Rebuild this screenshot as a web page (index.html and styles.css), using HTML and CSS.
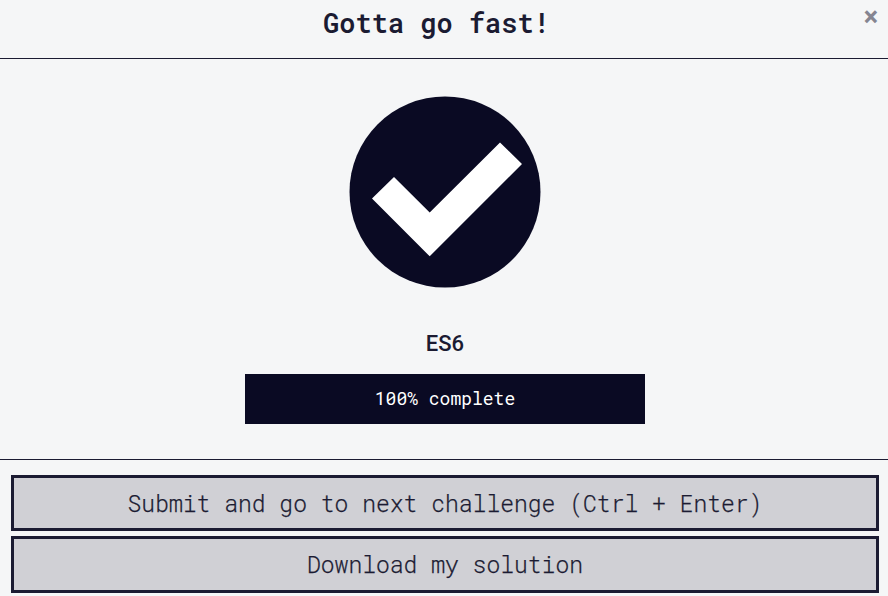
FILE: index.html
```html
<!DOCTYPE html>
<html lang="en">
<head>
<meta charset="utf-8">
<title>Challenge complete</title>
<link rel="stylesheet" href="styles.css">
</head>
<body>
<div class="modal">
<header class="header"><h1>Gotta go fast!</h1><button class="close" aria-label="Close">×</button></header>
<main class="body">
<svg class="check" viewBox="0 0 192 192" width="192" height="192"><circle cx="96" cy="96" r="95.5" fill="#0a0a23"/><path d="M45 81 80.700 116.500 151 46.500 173 68 80.700 160.300 23 102.600Z" fill="#fff"/></svg>
<h2>ES6</h2>
<div class="progress"><span>100% complete</span></div>
</main>
<footer class="footer">
<button class="action">Submit and go to next challenge (Ctrl + Enter)</button>
<button class="action download">Download my solution</button>
</footer>
</div>
</body>
</html>
```

FILE: styles.css
```css
* { box-sizing: border-box; }
body { margin: 0; background: #f5f6f7; color: #1b1b32; overflow: hidden; }
.modal { height: 596px; display: flex; flex-direction: column; }
.header { height: 59px; border-bottom: 1px solid #1b1b32; position: relative; text-align: center; }
h1 { margin: 5px 15px 0 0; font: 600 27px/36px "Roboto Mono", "DejaVu Sans Mono", monospace; }
.close { position: absolute; right: 10px; top: 2px; padding: 0; border: 0; background: none; color: #858591; font: 700 27px/30px Roboto, sans-serif; }
.body { height: 401px; border-bottom: 1px solid #1b1b32; display: flex; flex-direction: column; align-items: center; padding: 37px 0 0 2px; }
.check { display: block; flex: none; }
h2 { margin: 41px 0 15px; font: 500 22px/30px Roboto, sans-serif; }
.progress { width: 400px; height: 50px; background: #0a0a23; color: #fff; text-align: center; font: 18px/48px "Roboto Mono", "DejaVu Sans Mono", monospace; }
.footer { padding: 15px 9px 0 11px; display: flex; flex-direction: column; gap: 5px; }
.action { flex: none; height: 56px; padding: 0; border: 3px solid #1b1b32; border-radius: 0; background: #d0d0d5; color: #1b1b32; font: 300 23px/50px "Roboto Mono", "DejaVu Sans Mono", monospace; -webkit-text-stroke: 0.25px #1b1b32; }
.download { height: 57px; padding-bottom: 1px; }
```
